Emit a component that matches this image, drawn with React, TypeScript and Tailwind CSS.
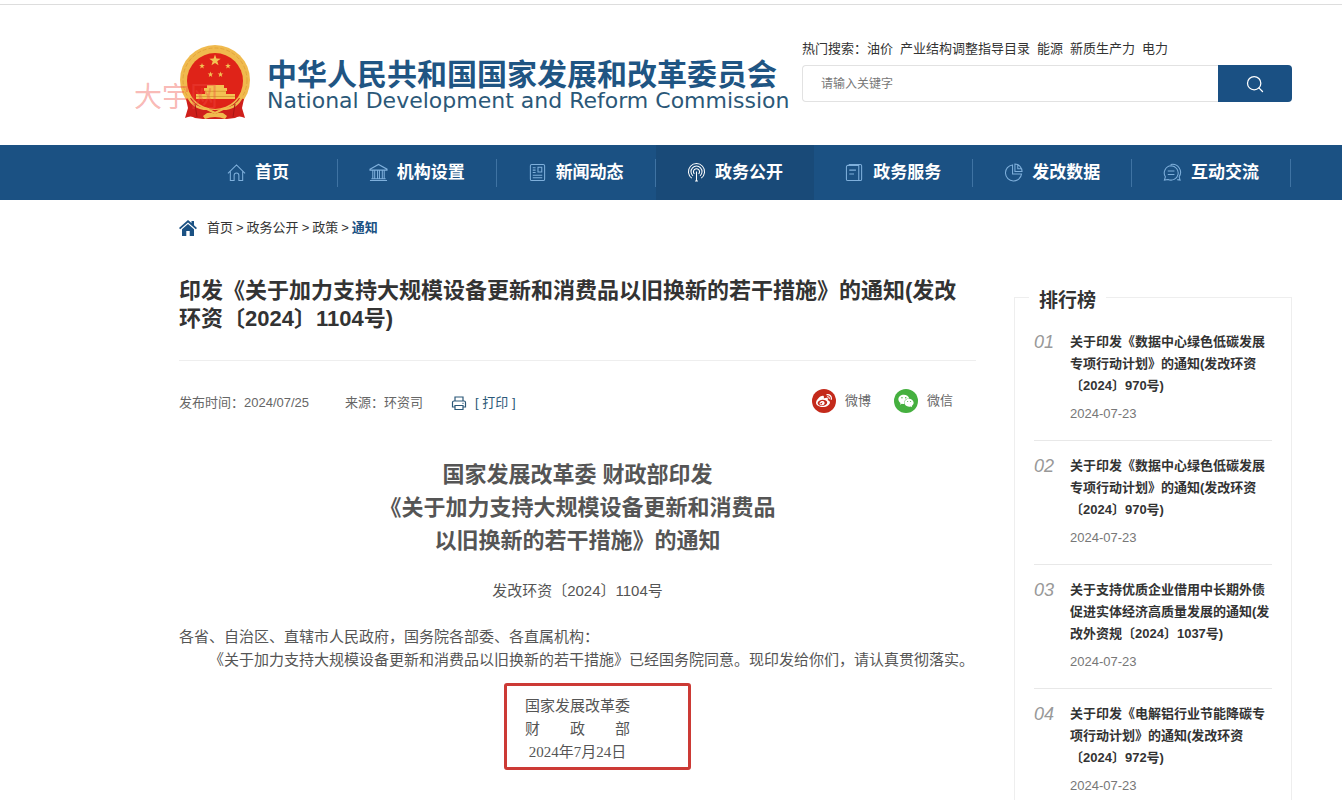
import type { ReactNode } from 'react';
import { Search } from 'lucide-react';
import { FaWeibo, FaWeixin } from 'react-icons/fa';

const navItems = [
  { label: '首页', icon: 'home' },
  { label: '机构设置', icon: 'bank' },
  { label: '新闻动态', icon: 'news' },
  { label: '政务公开', icon: 'signal', active: true },
  { label: '政务服务', icon: 'doc' },
  { label: '发改数据', icon: 'pie' },
  { label: '互动交流', icon: 'chat' },
];

const hotWords = ['油价', '产业结构调整指导目录', '能源', '新质生产力', '电力'];

const ranking = [
  { title: '关于印发《数据中心绿色低碳发展专项行动计划》的通知(发改环资〔2024〕970号)', date: '2024-07-23' },
  { title: '关于印发《数据中心绿色低碳发展专项行动计划》的通知(发改环资〔2024〕970号)', date: '2024-07-23' },
  { title: '关于支持优质企业借用中长期外债促进实体经济高质量发展的通知(发改外资规〔2024〕1037号)', date: '2024-07-23' },
  { title: '关于印发《电解铝行业节能降碳专项行动计划》的通知(发改环资〔2024〕972号)', date: '2024-07-23' },
];

const navIcons: Record<string, ReactNode> = {
  home: <path d="M1 11 10 2l9 9M3.5 9v9.5h4V13a2.5 2.5 0 0 1 5 0v5.5h4V9" />,
  bank: <path d="M1 6.5 10 1.5l9 5v1H1zM1 18.5h18M2.5 16.5h15M4 8v8M6 8v8M9 8v8M11 8v8M14 8v8M16 8v8" />,
  news: <path d="M4 1.5h12A1.5 1.5 0 0 1 17.5 3v14a1.5 1.5 0 0 1-1.5 1.5H4A1.5 1.5 0 0 1 2.5 17V3A1.5 1.5 0 0 1 4 1.5zM5 5h3M5 7.5h3M5 10h3M10.5 4.5h4v5h-4zM5 13h10M5 15.5h10" />,
  signal: <path d="M5 16a8.500 8.500 0 1 1 10 0M6.300 13.500a5.800 5.800 0 1 1 7.400 0M7.800 11.500a3.200 3.200 0 1 1 4.400 0M10 9v10M8.500 19h3" />,
  doc: <path d="M3 2.5h11.5v16H3A1.5 1.5 0 0 1 1.5 17V4A1.5 1.5 0 0 1 3 2.5zM4 1.500h12A1.5 1.5 0 0 1 17.5 3v14a1.5 1.5 0 0 1-1.5 1.5h-2M4.5 7.500h7M4.500 11.500h5" />,
  pie: <path d="M9 2a8.500 8.500 0 1 0 9.500 9.500H9zM11.500 1v8H19a8 8 0 0 0-7.500-8zM14.500 2v4H18" />,
  chat: <path d="M8.500 3a7.500 7.500 0 1 1-3.200 14.300L1.500 18l1-3.500A7.500 7.500 0 0 1 8.500 3zM5 8.500h7M5 12h7M8 1.500a8.500 8.500 0 0 1 9 13l1 3.500-3-.5" />,
};

function NavIcon({ name }: { name: string }) {
  return (
    <svg viewBox="0 0 20 20" className="h-[19px] w-[19px] shrink-0" fill="none" stroke="currentColor" strokeWidth="1.1" aria-hidden="true">
      {navIcons[name]}
    </svg>
  );
}

function star(cx: number, cy: number, r: number) {
  return Array.from({ length: 10 }, (_, i) => {
    const radius = i % 2 === 0 ? r : r * 0.4;
    const angle = (Math.PI / 5) * i - Math.PI / 2;
    return `${cx + radius * Math.cos(angle)},${cy + radius * Math.sin(angle)}`;
  }).join(' ');
}

function Emblem() {
  return (
    <svg viewBox="0 0 76 80" className="h-20 w-[76px] shrink-0" role="img" aria-label="国徽">
      <circle cx="38" cy="38" r="35" fill="#f0ba4e" />
      <circle cx="38" cy="38" r="32" fill="none" stroke="#e3a53c" strokeWidth="1" strokeDasharray="4 2" />
      <circle cx="38" cy="39" r="28" fill="#df2318" />
      <g fill="#f3c253">
        <polygon points={star(38, 18.5, 6)} />
        <polygon points={star(25, 24, 3)} />
        <polygon points={star(51, 24, 3)} />
        <polygon points={star(33.5, 32.5, 3)} />
        <polygon points={star(43.5, 32.5, 3)} />
        <path d="M30 43h17v3H30zM27 46h23v3H27zM28 49h21v3H28zM19 52h39v5H19z" />
      </g>
      <path d="M28 49.300h21M19 54.500h39" stroke="#cf8f2b" strokeWidth=".7" />
      {/* ribbon drapery and the gear under the gate */}
      <path d="M9 57l5-1q8 12 24 12t24-12l5 1-2 9 3 10q-6-3-10 0l-8 1H26l-8-1q-4-3-10 0l3-10z" fill="#cf1f1b" />
      <path d="M17 57q8 8 21 8t21-8z" fill="#df2318" />
      <path d="M11 55q6 12 19 12l8 4 8-4q13 0 19-12" fill="none" stroke="#f0ba4e" strokeWidth="2.200" />
      <path d="M28 77l-2-3 4-3q4-1 8 1 4-2 8-1l4 3-2 3q-5-2-10-2t-10 2z" fill="#f0ba4e" />
      <path d="M18 62l2 13M58 62l-2 13" stroke="#a81614" strokeWidth="1" />
    </svg>
  );
}

function Header() {
  return (
    <header className="flex h-[140px] items-start justify-between pr-[50px] pl-[177px]">
      <div className="relative flex items-start gap-[14px] pt-[37px]">
        <Emblem />
        <div className="pt-[18px] whitespace-nowrap text-[#1f5583]">
          <p className="text-[30px] leading-[30px] font-bold">中华人民共和国国家发展和改革委员会</p>
          <p className="font-['DejaVu_Sans'] text-[22px] leading-[22px] text-[#2b5878]">National Development and Reform Commission</p>
        </div>
        <span className="absolute top-[73px] -left-[43px] text-[28px] leading-[40px] text-[#f04a40]/40">大宇网</span>
      </div>

      <form className="w-[490px] shrink-0 pt-[34px]" onSubmit={(e) => e.preventDefault()}>
        <div className="flex gap-[7px] text-[13px] leading-5 text-[#333]">
          <span className="-mr-[7px]">热门搜索：</span>
          {hotWords.map((word) => (
            <a key={word} href="#">{word}</a>
          ))}
        </div>
        <div className="mt-[6px] flex h-[37px]">
          <input
            type="search"
            aria-label="请输入关键字"
            placeholder="请输入关键字"
            className="min-w-0 flex-1 rounded-l border border-r-0 border-[#e2e2e2] px-[18px] text-[12px] outline-none placeholder:text-[#777]"
          />
          <button type="submit" aria-label="搜索" className="flex w-[74px] items-center justify-center rounded-r bg-[#1a5083] text-white">
            <Search className="h-5 w-5" strokeWidth={1.5} />
          </button>
        </div>
      </form>
    </header>
  );
}

function Nav() {
  return (
    <nav className="bg-[#1b5183] pr-[51px] pl-[179px]">
      <ul className="grid h-[55px] grid-cols-7">
        {navItems.map((item) => (
          <li key={item.label} className={item.active ? 'flex items-center bg-[#194a78]' : 'flex items-center'}>
            <a href="#" className="flex flex-1 items-center justify-center gap-[9px] text-[17px] font-bold text-white">
              <span className={item.active ? 'text-white' : 'text-[#7fb0dc]'}>
                <NavIcon name={item.icon} />
              </span>
              {item.label}
            </a>
            {!item.active && <span className="h-7 w-px bg-[#3f73a3]" />}
          </li>
        ))}
      </ul>
    </nav>
  );
}

function Breadcrumb() {
  return (
    <div className="flex h-14 items-center gap-[10px] text-[13px] text-[#333]">
      <svg viewBox="0 0 18 16" className="h-4 w-[18px]" fill="#1b5183" aria-hidden="true">
        <path d="M9 0 0 8l1.200 1.300L9 2.500l7.800 6.800L18 8l-3-2.700V1h-2.500v2z" />
        <path d="M9 4 3 9.300V16h4.300v-5h3.400v5H15V9.300z" />
      </svg>
      <div className="flex gap-[3px]">
        <a href="#">首页</a>
        <span>&gt;</span>
        <a href="#">政务公开</a>
        <span>&gt;</span>
        <a href="#">政策</a>
        <span>&gt;</span>
        <a href="#" className="font-bold text-[#1b5183]">通知</a>
      </div>
    </div>
  );
}

function Article() {
  return (
    <article className="min-w-0 flex-1 pt-[21px] text-[#555]">
      <h1 className="text-[22px] leading-7 font-bold text-[#333]">
        印发《关于加力支持大规模设备更新和消费品以旧换新的若干措施》的通知(发改环资〔2024〕1104号)
      </h1>

      <div className="mt-[27px] flex items-end border-t border-[#eee] pt-7 pr-[23px] text-[13px] leading-5 text-[#666]">
        <span>发布时间：2024/07/25</span>
        <span className="ml-9">来源：环资司</span>
        <button type="button" className="ml-7 flex items-center gap-2 text-[#2b5878]">
          <svg viewBox="0 0 16 16" className="h-4 w-4" fill="none" stroke="currentColor" strokeWidth="1.2" aria-hidden="true">
            <path d="M4 6V2h8v4M3.5 12h-2V7.500A1.500 1.500 0 0 1 3 6h10a1.500 1.500 0 0 1 1.500 1.500V12h-2M4 10.500h8v4H4zM11.500 8.300h1" />
          </svg>
          [ 打印 ]
        </button>
        <div className="ml-auto flex gap-[23px]">
          <a href="#" className="flex items-center gap-[9px]">
            <span className="flex h-6 w-6 items-center justify-center rounded-full bg-[#c42a1b] text-white">
              <FaWeibo className="h-4 w-4" />
            </span>
            微博
          </a>
          <a href="#" className="flex items-center gap-[9px]">
            <span className="flex h-6 w-6 items-center justify-center rounded-full bg-[#45b03f] text-white">
              <FaWeixin className="h-4 w-4" />
            </span>
            微信
          </a>
        </div>
      </div>

      <h2 className="mt-[45px] text-center text-[22px] leading-[33px] font-bold">
        国家发展改革委 财政部印发
        <br />
        《关于加力支持大规模设备更新和消费品
        <br />
        以旧换新的若干措施》的通知
      </h2>
      <p className="mt-[22px] text-center text-[15px] leading-[23px]">发改环资〔2024〕1104号</p>

      <div className="mt-6 font-['Liberation_Serif','Noto_Sans_CJK_SC',serif] text-[15px] leading-[23px]">
        <p>各省、自治区、直辖市人民政府，国务院各部委、各直属机构：</p>
        <p className="indent-[30px]">《关于加力支持大规模设备更新和消费品以旧换新的若干措施》已经国务院同意。现印发给你们，请认真贯彻落实。</p>
        <div className="relative mx-auto mt-[23px] w-[105px] whitespace-nowrap">
          <p>国家发展改革委</p>
          <p className="flex justify-between">
            <span>财</span>
            <span>政</span>
            <span>部</span>
          </p>
          <p className="text-center">2024年7月24日</p>
          <div className="absolute -top-3 -left-[21px] h-[87px] w-[187px] rounded-[3px] border-3 border-[#cc3a35]" />
        </div>
      </div>
    </article>
  );
}

function Ranking() {
  return (
    <aside className="mt-[41px] w-[278px] shrink-0 border border-[#eee] px-[19px]">
      <h2 className="-mt-[10px] -ml-[5px] w-fit bg-white px-[10px] text-[19px] leading-[26px] font-bold text-[#333]">排行榜</h2>
      <ol className="mt-[3px] text-[13px] leading-[22px]">
        {ranking.map((item, i) => (
          <li key={i} className="flex border-b border-[#e8e8e8] pt-[14px] pb-[15px]">
            <span className="w-9 shrink-0 text-[18px] text-[#999] italic">0{i + 1}</span>
            <div>
              <a href="#" className="font-bold text-[#333]">{item.title}</a>
              <p className="mt-[6px] text-[#777]">{item.date}</p>
            </div>
          </li>
        ))}
      </ol>
    </aside>
  );
}

export default function App() {
  return (
    <div className="h-screen overflow-hidden bg-white pt-1 font-['Liberation_Sans','Noto_Sans_CJK_SC',sans-serif]">
      <div className="border-t border-[#ddd]">
        <Header />
        <Nav />
        <main className="pr-[50px] pl-[179px]">
          <Breadcrumb />
          <div className="flex items-start gap-[38px]">
            <Article />
            <Ranking />
          </div>
        </main>
      </div>
    </div>
  );
}
